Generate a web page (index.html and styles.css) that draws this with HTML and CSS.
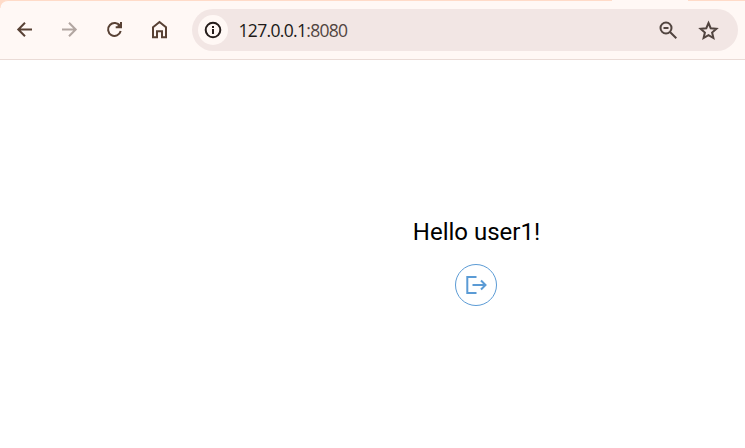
FILE: index.html
```html
<!DOCTYPE html>
<html lang="en">
<head>
<meta charset="utf-8">
<title>127.0.0.1:8080</title>
<link rel="stylesheet" href="styles.css">
</head>
<body>
<header class="toolbar">
  <span class="active-tab"></span>
  <nav class="nav">
    <svg class="icon" viewBox="0 0 24 24"><path d="M19 11.500H5.300M12 4.800l-6.700 6.700 6.700 6.700"/></svg>
    <svg class="icon disabled" viewBox="0 0 24 24"><path d="M4 11.500H17.700M11 4.800l6.700 6.700-6.700 6.700"/></svg>
    <svg class="icon" viewBox="0 0 24 24"><path d="M17 8.200A6.400 6.400 0 1 0 17.700 13M18 4V9.300H12.700M14.500 8.300H17V5.700"/></svg>
    <svg class="icon" viewBox="0 0 24 24"><path d="M5 9.200L11.500 4l6.500 5.200V19.300H14v-6H9v6H5z"/></svg>
  </nav>
  <div class="address">
    <span class="site-info"><svg class="icon" viewBox="0 0 24 24"><circle cx="12" cy="12" r="7.300"/><path d="M12 11v5M12 8v2"/></svg></span>
    <span class="url">127.0.0.1<span class="port">:8080</span></span>
    <svg class="icon tool" viewBox="0 0 24 24"><circle cx="11" cy="10" r="5.500"/><path d="M8.500 10h5M15 14l6.300 6.300"/></svg>
    <svg class="icon tool star" viewBox="0 0 24 24"><path d="M12.500 5l2.200 5.200 5.700.5-4.300 3.800 1.300 5.500-4.900-2.900-4.900 2.900 1.300-5.500-4.300-3.800 5.700-.5z"/></svg>
  </div>
</header>
<main class="page">
  <p class="greeting">Hello user1!</p>
  <button class="logout" aria-label="Log out"><svg viewBox="0 0 24 24"><path d="M12.500 4H3.300v16h9.200M8.500 12h13M17 7.500L21.500 12 17 16.500"/></svg></button>
</main>
</body>
</html>
```
FILE: styles.css
```css
* { box-sizing: border-box; }
body { margin: 0; background: #fff; overflow: hidden; }
.toolbar {
  position: relative;
  display: flex;
  align-items: center;
  height: 60px;
  padding: 0 7px 0 13px;
  background: #fff8f5;
  border-top: 1px solid #ffdbc8;
  border-bottom: 1px solid #eadbd6;
  border-top-left-radius: 8px;
}
.toolbar::before {
  content: "";
  position: absolute;
  inset: -1px auto auto 0;
  width: 8px;
  height: 8px;
  background: radial-gradient(circle at 100% 100%, transparent 7px, #ffdbc8 8px);
}
.active-tab {
  position: absolute;
  top: -1px;
  left: 612px;
  width: 76px;
  height: 1px;
  background: #fff8f5;
}
.nav { display: flex; gap: 21px; }
.icon {
  display: block;
  width: 24px;
  height: 24px;
  fill: none;
  stroke: #584134;
  stroke-width: 2;
}
.disabled { stroke: #b2a6a1; }
.address {
  display: flex;
  align-items: center;
  flex: 1;
  height: 42px;
  margin-left: 20px;
  padding: 0 18px 0 6px;
  border-radius: 21px;
  background: #f2e6e4;
}
.site-info {
  display: grid;
  place-items: center;
  width: 30px;
  height: 30px;
  border-radius: 50%;
  background: #fff8f5;
}
.site-info .icon { stroke: #241c1a; }
.url {
  flex: 1;
  margin-left: 10.5px;
  font: 17.5px/24px "Open Sans", "Noto Sans", sans-serif;
  letter-spacing: -0.68px;
  color: #201a18;
}
.port { color: #51443f; }
.tool { stroke: #51443f; }
.star { margin-left: 17px; }
.page {
  display: flex;
  flex-direction: column;
  align-items: center;
  width: 127px;
  margin: 156px 0 0 413px;
}
.greeting {
  margin: 0;
  font: 24px/32px Roboto, sans-serif;
  white-space: nowrap;
  color: #000;
}
.logout {
  display: grid;
  place-items: center;
  width: 42px;
  height: 42px;
  margin: 16px 1px 0 0;
  padding: 0;
  border: 1px solid #5b9bd5;
  border-radius: 50%;
  background: #fff;
}
.logout svg {
  width: 24px;
  height: 24px;
  fill: none;
  stroke: #5b9bd5;
  stroke-width: 2;
}
```
